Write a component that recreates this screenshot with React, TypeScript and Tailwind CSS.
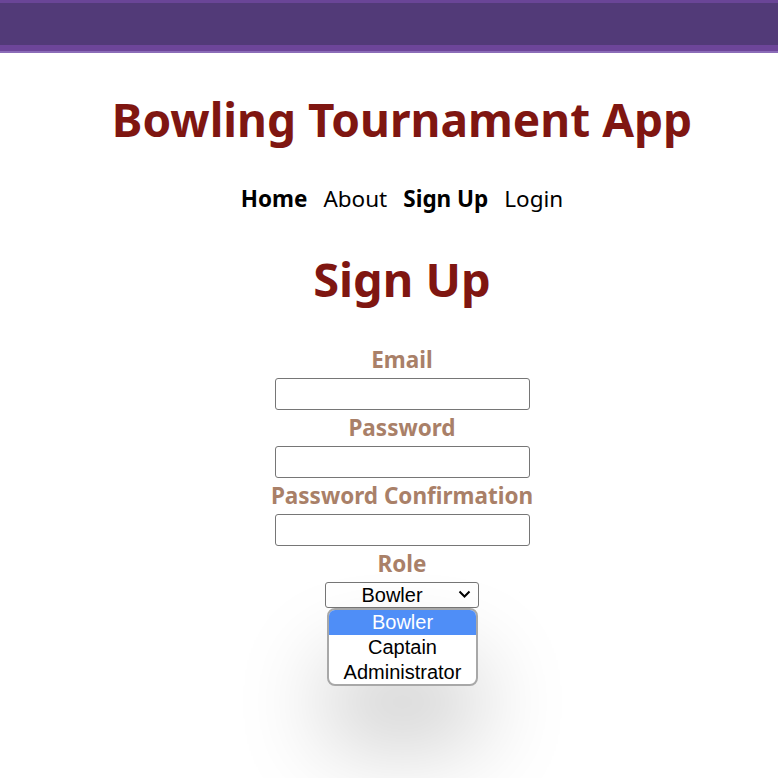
import React from 'react';

const Field = ({ label }: { label: string }) => (
  <div className="flex flex-col items-center">
    <label className="text-[22.5px] font-bold leading-[30px] text-[#a98068]">{label}</label>
    <input className="mt-[3px] w-[255px] h-[32px] rounded-[3px] border border-[#767676] bg-white" />
  </div>
);

const App = () => {
  return (
    <div className="min-h-[778px] bg-white font-['Noto_Sans',sans-serif] overflow-hidden">
      <div className="h-[53px] flex flex-col">
        <div className="h-[3px] bg-[#6a4597]" />
        <div className="h-[42px] bg-[#523a78]" />
        <div className="h-[6px] bg-[#6d4599]" />
        <div className="h-[2px] bg-[#8b6cb8]" />
      </div>

      <div className="pl-[26px]">
        <h1 className="mt-[36px] text-center text-[46px] font-bold leading-[60px] text-[#7f1611]">
          Bowling Tournament App
        </h1>

        <nav className="mt-[35px] flex justify-center gap-[16px] text-[22.5px] leading-[30px] text-black">
          <a className="font-bold">Home</a>
          <a>About</a>
          <a className="font-bold">Sign Up</a>
          <a>Login</a>
        </nav>

        <h2 className="mt-[35px] text-center text-[47px] font-bold leading-[60px] text-[#7f1611]">Sign Up</h2>

        <form className="mt-[36px] flex flex-col items-center gap-[3px]">
          <Field label="Email" />
          <Field label="Password" />
          <Field label="Password Confirmation" />
          <div className="flex flex-col items-center">
            <label className="text-[22.5px] font-bold leading-[30px] text-[#a98068]">Role</label>
            <div className="relative mt-[3px]">
              <div className="w-[154px] h-[26px] rounded-[3px] border border-[#767676] bg-white flex items-center justify-center font-['Liberation_Sans',Arial,sans-serif] text-[20px] leading-none text-black">
                <span className="mr-[20px]">Bowler</span>
                <svg className="absolute right-[8px] top-[8px]" width="13" height="9" viewBox="0 0 13 9">
                  <path d="M1.5 1.5 L6.5 6.5 L11.5 1.5" stroke="#000" strokeWidth="2" fill="none" />
                </svg>
              </div>
              <div className="absolute left-[2px] top-[26px] w-[151px] rounded-[8px] border-2 border-[#a8a8a8] bg-white overflow-hidden shadow-[0_55px_90px_rgba(0,0,0,0.22)] font-['Liberation_Sans',Arial,sans-serif] text-[20px] text-center text-black">
                <div className="h-[25px] leading-[25px] bg-[#4f8ef7] text-white">Bowler</div>
                <div className="h-[25px] leading-[25px]">Captain</div>
                <div className="h-[24px] leading-[24px]">Administrator</div>
              </div>
            </div>
          </div>
        </form>
      </div>
    </div>
  );
};

export default App;
